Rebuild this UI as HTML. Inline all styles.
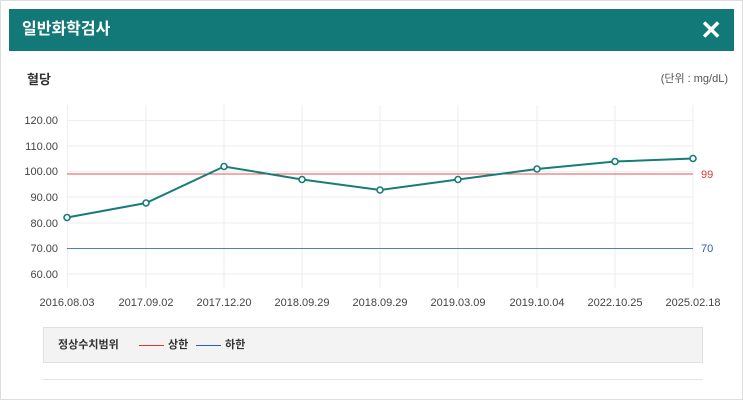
<!DOCTYPE html><html><head><meta charset="utf-8"><style>
body{margin:0;width:743px;height:400px;background:#fff;font-family:"Liberation Sans","Noto Sans CJK KR",sans-serif;overflow:hidden}
.frame{position:absolute;left:0;top:0;width:741px;height:398px;border:1px solid #ddd}
.hd{position:absolute;left:9px;top:9px;width:725px;height:42px;background:#127878;color:#fff;font-size:16px;font-weight:bold;line-height:42px;text-indent:13px}
.x{position:absolute;right:12px;top:0;font-size:26px;line-height:42px}
.t{position:absolute;left:27px;top:69px;font-size:13px;font-weight:bold;color:#333}
.u{position:absolute;right:15px;top:70px;font-size:11px;color:#555}
svg{position:absolute;left:0;top:0}
.lg{position:absolute;left:43px;top:327px;width:658px;height:34px;background:#f3f3f3;border:1px solid #e0e0e0;font-size:11px;font-weight:bold;color:#333;line-height:34px}
.bl{position:absolute;left:43px;top:379px;width:660px;height:1px;background:#e3e3e3}
</style></head><body>
<div class="frame"></div>
<div class="hd">일반화학검사<span class="x">✕</span></div>
<div class="t">혈당</div><div class="u">(단위 : mg/dL)</div>
<svg width="743" height="400" font-family="Liberation Sans" font-size="11" fill="#444">
<g stroke="#eee" stroke-width="1">
<line x1="67" y1="120.5" x2="693" y2="120.5"/><line x1="67" y1="146" x2="693" y2="146"/><line x1="67" y1="171.5" x2="693" y2="171.5"/><line x1="67" y1="197" x2="693" y2="197"/><line x1="67" y1="223" x2="693" y2="223"/><line x1="67" y1="274" x2="693" y2="274"/>
<line x1="67.5" y1="105" x2="67.5" y2="288"/><line x1="146" y1="105" x2="146" y2="288"/><line x1="224" y1="105" x2="224" y2="288"/><line x1="302" y1="105" x2="302" y2="288"/><line x1="380" y1="105" x2="380" y2="288"/><line x1="458" y1="105" x2="458" y2="288"/><line x1="537" y1="105" x2="537" y2="288"/><line x1="615" y1="105" x2="615" y2="288"/><line x1="693" y1="105" x2="693" y2="288"/>
</g>
<g text-anchor="end"><text x="58" y="124">120.00</text><text x="58" y="150">110.00</text><text x="58" y="175">100.00</text><text x="58" y="201">90.00</text><text x="58" y="227">80.00</text><text x="58" y="252">70.00</text><text x="58" y="278">60.00</text></g>
<g text-anchor="middle"><text x="67" y="306">2016.08.03</text><text x="146" y="306">2017.09.02</text><text x="224" y="306">2017.12.20</text><text x="302" y="306">2018.09.29</text><text x="380" y="306">2018.09.29</text><text x="458" y="306">2019.03.09</text><text x="537" y="306">2019.10.04</text><text x="615" y="306">2022.10.25</text><text x="693" y="306">2025.02.18</text></g>
<line x1="67" y1="174" x2="693" y2="174" stroke="#e25555"/>
<line x1="67" y1="248.5" x2="693" y2="248.5" stroke="#4a7fc4"/>
<text x="701" y="178" fill="#d33">99</text><text x="701" y="252" fill="#2a62b0">70</text>
<polyline points="67,217.5 146,203 224,166.5 302,179.5 380,190 458,179.5 537,169 615,161.5 693,158.5" fill="none" stroke="#187c78" stroke-width="2"/>
<g fill="#fff" stroke="#187c78" stroke-width="1.6"><circle cx="67" cy="217.5" r="3"/><circle cx="146" cy="203" r="3"/><circle cx="224" cy="166.5" r="3"/><circle cx="302" cy="179.5" r="3"/><circle cx="380" cy="190" r="3"/><circle cx="458" cy="179.5" r="3"/><circle cx="537" cy="169" r="3"/><circle cx="615" cy="161.5" r="3"/><circle cx="693" cy="158.5" r="3"/></g>
</svg>
<div class="lg"><span style="position:absolute;left:14px">정상수치범위</span>
<span style="position:absolute;left:95px;top:17px;width:25px;height:1px;background:#d33"></span><span style="position:absolute;left:124px">상한</span>
<span style="position:absolute;left:152px;top:17px;width:25px;height:1px;background:#2a62b0"></span><span style="position:absolute;left:181px">하한</span></div>
<div class="bl"></div>
</body></html>
